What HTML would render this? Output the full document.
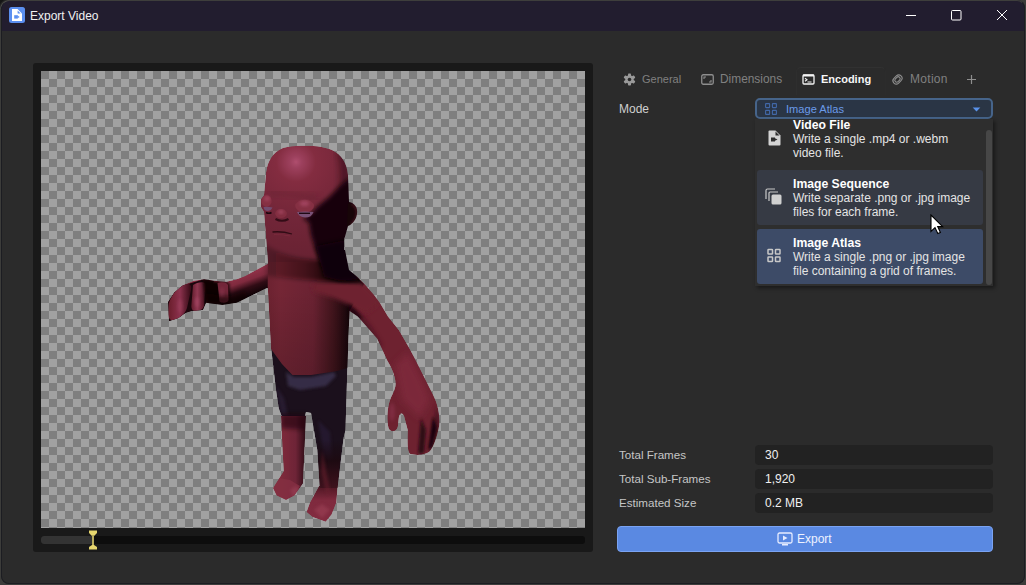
<!DOCTYPE html>
<html><head><meta charset="utf-8">
<style>
*{box-sizing:border-box;margin:0;padding:0}
html,body{width:1026px;height:585px;overflow:hidden;background:#1e1e1e;font-family:"Liberation Sans",sans-serif}
#win{position:absolute;left:0;top:0;width:1026px;height:585px;background:#2b2b2b;overflow:hidden}
#winb{position:absolute;left:1px;top:0px;width:1024px;height:584px;border-radius:8px;border:1px solid #1c1d22;border-top:1px solid #3e3e3c;box-shadow:0 0 0 30px #3c3c3a;pointer-events:none}
#title{position:absolute;left:0;top:0;width:1026px;height:31px;background:#221d2f}
.t{position:absolute;white-space:nowrap;line-height:1}
#preview{position:absolute;left:33px;top:63px;width:560px;height:489px;background:#191919;border-radius:3px}
#checker{position:absolute;left:41px;top:71px;width:544px;height:457px;
 background-color:#7f7f7f;
 background-image:linear-gradient(45deg,#a1a1a1 25%,transparent 25%,transparent 75%,#a1a1a1 75%),linear-gradient(45deg,#a1a1a1 25%,transparent 25%,transparent 75%,#a1a1a1 75%);
 background-size:16px 16px;background-position:0 0,8px 8px}
.lbl{position:absolute;font-size:11.6px;color:#c6c6c6;line-height:1;white-space:nowrap}
.box{position:absolute;left:755px;width:238px;height:20px;background:#222222;border-radius:4px}
.val{position:absolute;left:765px;font-size:12px;color:#f0f0f0;line-height:1;white-space:nowrap}
.tab{position:absolute;top:74px;font-size:12px;color:#8a8a8a;line-height:1;white-space:nowrap}
.item{position:absolute;left:757px;width:226px;height:55px;border-radius:3px}
.it{position:absolute;left:793px;font-size:12px;color:#e4e4e4;line-height:14px;white-space:nowrap}
.it b{font-weight:700;color:#fff;font-size:12.2px}
</style></head><body>
<div id="win">
 <div id="title">
  <svg class="t" style="left:9px;top:7px" width="16" height="16" viewBox="0 0 16 16">
   <rect x="0" y="0" width="16" height="16" rx="2.5" fill="#5b8ff0"/>
   <path d="M3 2 H8.5 L13 6.5 V14 H3 Z" fill="#fff"/>
   <path d="M8.6 3.6 L11.6 6.4 H8.6 Z" fill="#5b8ff0"/>
   <rect x="5.2" y="8.2" width="3.6" height="3.4" fill="#5b8ff0"/>
   <path d="M8.5 8.6 L10.7 9.9 L8.5 11.2Z" fill="#5b8ff0"/>
  </svg>
  <div class="t" style="left:30px;top:10px;font-size:12px;color:#f0f0f0">Export Video</div>
  <svg class="t" style="left:900px;top:0" width="125" height="31" viewBox="900 0 125 31">
   <path d="M906 15.5 H916" stroke="#fff" stroke-width="1"/>
   <rect x="951.5" y="10.5" width="9.5" height="9.5" rx="1" fill="none" stroke="#fff" stroke-width="1"/>
   <path d="M997 10 L1007 20 M1007 10 L997 20" stroke="#fff" stroke-width="1"/>
  </svg>
 </div>

 <div id="preview"></div>
 <div id="checker"></div>
 <svg id="fig" class="t" style="left:0;top:0" width="1026" height="585" viewBox="0 0 1026 585"><defs>
 <radialGradient id="gHead" cx="296" cy="162" r="100" gradientUnits="userSpaceOnUse">
  <stop offset="0" stop-color="#a84e80"/>
  <stop offset="0.06" stop-color="#96406c"/>
  <stop offset="0.2" stop-color="#7e2c4a"/>
  <stop offset="0.55" stop-color="#6e2642"/>
  <stop offset="1" stop-color="#64223a"/>
 </radialGradient>
 <linearGradient id="gTorso" x1="268" y1="0" x2="350" y2="0" gradientUnits="userSpaceOnUse">
  <stop offset="0" stop-color="#682238"/>
  <stop offset="0.15" stop-color="#70263e"/>
  <stop offset="0.55" stop-color="#66223a"/>
  <stop offset="0.8" stop-color="#3e1420"/>
  <stop offset="1" stop-color="#12040a"/>
 </linearGradient>
 <linearGradient id="gTorsoV" x1="0" y1="290" x2="0" y2="370" gradientUnits="userSpaceOnUse">
  <stop offset="0" stop-color="#000" stop-opacity="0"/>
  <stop offset="1" stop-color="#000" stop-opacity="0.15"/>
 </linearGradient>
 <linearGradient id="gArmL" x1="250" y1="272" x2="258" y2="294" gradientUnits="userSpaceOnUse">
  <stop offset="0" stop-color="#8c3254"/>
  <stop offset="0.3" stop-color="#7a2a48"/>
  <stop offset="0.6" stop-color="#2e0c18"/>
  <stop offset="1" stop-color="#0c0206"/>
 </linearGradient>
 <linearGradient id="gF1" x1="170" y1="0" x2="190" y2="0" gradientUnits="userSpaceOnUse">
  <stop offset="0" stop-color="#6a2038"/>
  <stop offset="0.5" stop-color="#86325a"/>
  <stop offset="1" stop-color="#3a0e1e"/>
 </linearGradient>
 <linearGradient id="gF2" x1="191" y1="0" x2="205" y2="0" gradientUnits="userSpaceOnUse">
  <stop offset="0" stop-color="#5a1a30"/>
  <stop offset="0.45" stop-color="#8a385e"/>
  <stop offset="1" stop-color="#4a1428"/>
 </linearGradient>
 <linearGradient id="gLegL" x1="280" y1="0" x2="306" y2="0" gradientUnits="userSpaceOnUse">
  <stop offset="0" stop-color="#7a2a44"/>
  <stop offset="0.6" stop-color="#6a2440"/>
  <stop offset="1" stop-color="#2a0c18"/>
 </linearGradient>
 <linearGradient id="gChin" x1="266" y1="0" x2="346" y2="0" gradientUnits="userSpaceOnUse">
  <stop offset="0" stop-color="#14040a" stop-opacity="0.2"/>
  <stop offset="0.5" stop-color="#14040a" stop-opacity="0.5"/>
  <stop offset="1" stop-color="#0a0206" stop-opacity="1"/>
 </linearGradient>
 <filter id="hue" color-interpolation-filters="sRGB"><feColorMatrix type="matrix" values="1.04 0 0 0 0  0 1 0 0 0  0 0 0.86 0 0  0 0 0 1 0"/></filter>
 <linearGradient id="gLegR" x1="0" y1="440" x2="0" y2="500" gradientUnits="userSpaceOnUse">
  <stop offset="0" stop-color="#180a14" stop-opacity="0"/>
  <stop offset="0.35" stop-color="#1c0a14"/>
  <stop offset="1" stop-color="#4a1628"/>
 </linearGradient>
 <linearGradient id="gFootR" x1="0" y1="486" x2="0" y2="522" gradientUnits="userSpaceOnUse">
  <stop offset="0" stop-color="#4a1628"/>
  <stop offset="0.4" stop-color="#7a2a48"/>
  <stop offset="1" stop-color="#7e2c4a"/>
 </linearGradient>
 <filter id="blur1" x="-20%" y="-20%" width="140%" height="140%"><feGaussianBlur stdDeviation="1.5"/></filter>
 <filter id="blur2" x="-30%" y="-30%" width="160%" height="160%"><feGaussianBlur stdDeviation="2.2"/></filter>
 <filter id="blur3" x="-30%" y="-30%" width="160%" height="160%"><feGaussianBlur stdDeviation="3.5"/></filter>
 <path id="sArmL" d="M271 262 L245 276 L236.8 279.2 L226.5 281.8 L214.2 280.8 L204 279.2 L193.7 280.8 L182.4 285.4 L174.2 292.6 L168 301.8 L168.5 314 L169 321.3 L178.3 318.2 L185.5 313 L191.7 311 L203 310 L206 302.8 L222.4 304.9 L236.8 302.8 L245 298.7 L266.6 288.3 L271 288 Z"/>
 <path id="sArmR" d="M345 262 L349 270 L357.5 277 L364.3 283.8 L373.9 294.7 L380 303 L388 316.5 L398.8 330 L408.4 346.6 L413.8 356.4 L422 372.8 L432.3 393.3 C436 400 439.5 410 439.5 422 C439 432 434 446 430.3 450.8 C427 455 416 456 409.7 453.8 C407 450 407.5 440 407.7 430 L404 416 C402 412 399.5 413 398.8 418 L397.8 427 C396.5 432 390.5 433 388.5 428 C386.5 420 387.5 408 389.5 401.5 C391.5 395 395.5 390 395.6 384 C395.5 375 390 365 387.2 360.5 L382.4 350 L377 338.4 L367.4 327.5 L357.8 316.5 L349.6 311 L345 290 Z"/>
 <path id="sShorts" d="M271 347 L276 390 L278.8 408.6 L282 417 L305 416 L306 412 L311 413 L317.3 450 L319.7 488 L337.6 488 L343.6 438 L345.5 430 L347 381 L348 345 Z"/>
 <path id="sLegL" d="M281 416 L282.5 450 L283.7 471 L279 478.6 L273 488 L276.6 495.4 L286 500 L294.5 495.4 L303 483.4 L304 462 L306 416 Z"/>
 <path id="sFootR" d="M319 486 L310 502.6 L306.5 512 L312.5 517 L325.7 521.7 L331.6 514.5 L336.4 502.6 L337.6 486 Z"/>
 <path id="sTorso" d="M268 250 L345 250 L349 270 L364 284 L349.6 311 L348.5 337 L347.5 368 L337 371 L311 375 L292.5 375 L282 364 L271 349 L269 311 L267.7 286 Z"/>
 <path id="sHead" d="M296 146 C310 145 324 146 332 150 C342 155 347 163 348 175 L349 202 C355 203 358 208 357 214 C356 221 351 225 348 226 L344 240 L344.5 262 L268 262 L265.6 232.6 L264 212 L261 207 L261 199 L264 195 L265.6 178 C266 164 271 155 279 150 C284 147 290 146 296 146 Z"/>
 <clipPath id="cBody"><use href="#sArmL"/><use href="#sArmR"/><use href="#sShorts"/><use href="#sLegL"/><use href="#sFootR"/><use href="#sTorso"/><use href="#sHead"/></clipPath>
</defs>
<g filter="url(#hue)"><g clip-path="url(#cBody)">
<!-- left arm -->
<use href="#sArmL" fill="url(#gArmL)"/>
<path d="M168 302 L174 292.6 L182.4 285.4 L204 279.2 L214 281 L206 302.8 L203 310 L191.7 311 L185.5 313 L178.3 318.2 L169 321.3 Z" fill="#1a060e"/>
<path d="M169 303 C172 294 178 287 186 284 C190 283 192 286 191 290 L187 308 C185 314 180 318 174 320 C170 321 168 318 168.5 313 Z" fill="url(#gF1)"/>
<path d="M193 285 C197 282 204 281 206 284 L204 306 C203 310 198 311.5 194 311 C191.5 310 191 307 191.5 304 Z" fill="url(#gF2)"/>
<path d="M203 279.5 L218 281.5 L229 283 L230 303 L206 303.5 Z" fill="#0e0306" filter="url(#blur1)"/>
<path d="M217.5 283 C221 281.5 227 282 228 285 L228.6 300 C228 303 222 303.5 219.5 301.5 Z" fill="#6e2642"/>
<path d="M206 293 L217 295 L230 296 L245 291 L250 302 L206 308 Z" fill="#0c0206" opacity="0.6" filter="url(#blur2)"/>
<ellipse cx="197" cy="302" rx="2.2" ry="5" fill="#a04a78" opacity="0.65" filter="url(#blur1)"/>
<ellipse cx="180" cy="306" rx="2.5" ry="7" fill="#9a4470" opacity="0.55" filter="url(#blur1)"/>
<ellipse cx="222" cy="292" rx="2" ry="5" fill="#8a3a60" opacity="0.5" filter="url(#blur1)"/>
<!-- right arm -->
<use href="#sArmR" fill="#6a2238"/>
<path d="M395 365 L408 352 L422 380 L430 400 L420 418 L402 400 Z" fill="#7a2a46" filter="url(#blur3)" opacity="0.8"/>
<path d="M349 306 L360 312 L372 328 L382 345 L376 350 L360 330 L349 320 Z" fill="#3a1020" filter="url(#blur2)" opacity="0.6"/>
<ellipse cx="392" cy="412" rx="3" ry="9" fill="#86345a" opacity="0.55" filter="url(#blur1)"/>
<path d="M436 405 L440 420 L436 440 L431 450 L434 420 Z" fill="#3a1020" opacity="0.6" filter="url(#blur1)"/>
<path d="M421 418 L426 430 L424 453 L418 454 Z" fill="#2a0a16" filter="url(#blur1)"/>
<path d="M433 416 L437 428 L432 448 L428 450 Z" fill="#14040a" filter="url(#blur1)"/>
<!-- shorts -->
<use href="#sShorts" fill="#1a1020"/>
<path d="M286 372 L294 377 L311 377 L334 372 L336 376 L326 386 L300 390 L288 386 Z" fill="#38305a" opacity="0.85" filter="url(#blur1)"/>
<path d="M276 386 L284 398 L288 416 L281 415 Z" fill="#302850" opacity="0.5" filter="url(#blur1)"/>
<path d="M318 420 L330 432 L333 468 L326 468 Z" fill="#2e2450" opacity="0.45" filter="url(#blur1)"/>
<!-- left leg -->
<use href="#sLegL" fill="url(#gLegL)"/>
<path d="M281 414 L306 414 L306 430 L281 428 Z" fill="#1a0610" opacity="0.6" filter="url(#blur2)"/>
<path d="M279 478 L273 488 L276.6 495.4 L286 500 L294.5 495.4 L300 486 L290 480 Z" fill="#80304e" opacity="0.8"/>
<!-- right foot -->
<use href="#sFootR" fill="url(#gFootR)"/>
<path d="M317 440 L319.7 488 L337.6 488 L342 440 Z" fill="url(#gLegR)"/>
<path d="M322 450 L326 470 L330 492 L327 494 L321 472 Z" fill="#6a2238" opacity="0.5" filter="url(#blur1)"/>
<path d="M290 490 L296 486 L300 490 L294 498 Z" fill="#9a4468" opacity="0.5" filter="url(#blur1)"/>
<path d="M314 510 L322 504 L330 510 L322 518 Z" fill="#9a4468" opacity="0.5" filter="url(#blur1)"/>
<!-- torso -->
<use href="#sTorso" fill="url(#gTorso)"/>
<use href="#sTorso" fill="url(#gTorsoV)"/>
<path d="M312 283 L345 282 L362 283 L374 295 L380 303 L366 314 L352 306 L334 298 L314 292 Z" fill="#6a2238" filter="url(#blur2)"/>
<path d="M349 304 L356 310 L362 318 L352 322 L349 315 Z" fill="#1a060e" opacity="0.8" filter="url(#blur1)"/>
<!-- head -->
<use href="#sHead" fill="url(#gHead)"/>
<path d="M262 240 C275 255 300 260 322 260 L346 258 L350 280 C330 282 300 280 266 276 Z" fill="url(#gChin)" filter="url(#blur2)"/>
<path d="M345 150 C350 170 350 190 349 205 L338 200 C342 185 342 165 337 150 Z" fill="#1a060e" opacity="0.55" filter="url(#blur3)"/>
<path d="M303 219 L309 222 L311 235 L315 248 L320 262 L328.5 277 L345 281 L360 281 L349 270 L352 260 L360 240 L362 212 L358 190 L352 176 L340 186 L328 198 L317 207 L312 213 Z" fill="#12040a" filter="url(#blur2)"/>
<path d="M316 246 L346 240 L352 270 L362 279 L340 281 L324 277 Z" fill="#0e0408" opacity="0.95" filter="url(#blur2)"/>
<path d="M348 203 C354 203 358 208 357 214 C356 221 351 225 347 226 Z" fill="#160509"/>
<path d="M352 204 C356 206 357.5 210 357 214 C356.5 219 354 222 351 224" stroke="#5a1a30" stroke-width="1.6" fill="none" filter="url(#blur1)"/>

<!-- eyes / features -->
<path d="M268 193 C282 192 300 195 318 198" stroke="#4a1628" stroke-width="5" fill="none" opacity="0.3" filter="url(#blur3)"/>
<ellipse cx="266.5" cy="201" rx="5.2" ry="5.8" fill="#80304e"/>
<ellipse cx="267" cy="198.5" rx="2.8" ry="2.6" fill="#a04672" opacity="0.75" filter="url(#blur1)"/>
<path d="M263.5 207 Q268 206.5 272.5 207.5 Q271 211 267 211 Q264 210.5 263.5 207 Z" fill="#6e4c82"/>
<path d="M266 212.5 Q269 214 271.5 212.5" stroke="#1a0610" stroke-width="1.6" fill="none"/>
<ellipse cx="304.6" cy="206" rx="9.4" ry="6.3" fill="#80304e"/>
<ellipse cx="304.5" cy="203.5" rx="4.5" ry="2.8" fill="#a24a78" opacity="0.75" filter="url(#blur1)"/>
<path d="M297 212 Q305 211 313.5 212 Q312 217.5 305 217.5 Q299 217 297 212 Z" fill="#74528a"/>
<path d="M299 213.3 H310" stroke="#1a0610" stroke-width="1.3"/>
<ellipse cx="281" cy="213.5" rx="5.8" ry="4.6" fill="#7e2e4c"/>
<ellipse cx="281" cy="212" rx="2.6" ry="2" fill="#a04a76" opacity="0.8" filter="url(#blur1)"/>
<path d="M275.5 219 Q282 222.5 288.5 219" stroke="#2a0a16" stroke-width="2.2" fill="none" opacity="0.9"/>
<path d="M272.5 232 Q282 231 292 234" stroke="#2e0c18" stroke-width="1.3" fill="none"/>
<path d="M274 234.5 Q283 234.5 290 236" stroke="#7a2c48" stroke-width="1.2" fill="none" opacity="0.7"/>
</g></g>
</svg>

 <!-- timeline -->
 <div style="position:absolute;left:41px;top:536px;width:544px;height:8px;background:#0d0d0d;border-radius:3px"></div>
 <div style="position:absolute;left:41px;top:536px;width:52px;height:8px;background:#333;border-radius:3px 0 0 3px"></div>
 <svg class="t" style="left:88px;top:530px" width="10" height="20" viewBox="0 0 10 20">
  <path d="M1 0.5 H9 V3 L6 6 V15 L9 17 V19.5 H1 V17 L4 15 V6 L1 3 Z" fill="#e6d66e"/>
  <rect x="4.4" y="5" width="1.2" height="10" fill="#9a9050"/>
 </svg>

 <!-- tabs -->
 <div style="position:absolute;left:796px;top:67px;width:90px;height:28px;border:1px solid #313131;border-bottom:none;border-right-color:#2c2c2c;border-left-color:#2e2e2e;border-radius:5px 5px 0 0"></div>
 <svg class="t" style="left:623px;top:73px" width="13" height="13" viewBox="0 0 13 13">
  <g fill="#9a9a9a"><circle cx="6.5" cy="6.5" r="4.2"/>
  <rect x="5" y="0.5" width="3" height="12" rx="0.8"/>
  <rect x="5" y="0.5" width="3" height="12" rx="0.8" transform="rotate(60 6.5 6.5)"/>
  <rect x="5" y="0.5" width="3" height="12" rx="0.8" transform="rotate(120 6.5 6.5)"/></g>
  <circle cx="6.5" cy="6.5" r="1.8" fill="#2b2b2b"/>
 </svg>
 <div class="tab" style="left:642px;font-size:11px;top:74px;color:#808080">General</div>
 <svg class="t" style="left:701px;top:74px" width="13" height="11" viewBox="0 0 13 11">
  <rect x="0.75" y="0.75" width="11.5" height="9.5" rx="1.5" fill="none" stroke="#8e8e8e" stroke-width="1.3"/>
  <path d="M3 5 V3 H5" fill="none" stroke="#8e8e8e" stroke-width="1.1"/>
  <path d="M10 6 V8 H8" fill="none" stroke="#8e8e8e" stroke-width="1.1"/>
 </svg>
 <div class="tab" style="left:720px;top:74px;font-size:11.9px;color:#808080">Dimensions</div>
 <svg class="t" style="left:802px;top:74px" width="13" height="11" viewBox="0 0 13 11">
  <rect x="1" y="1" width="11" height="9" rx="1" fill="none" stroke="#f4f4f4" stroke-width="1.3"/>
  <rect x="1" y="0.5" width="11" height="2" fill="#f4f4f4"/>
  <path d="M3 4.3 L5 5.8 L3 7.3" fill="none" stroke="#f4f4f4" stroke-width="1.1"/>
  <path d="M5.5 8 H9.5" stroke="#f4f4f4" stroke-width="1"/>
 </svg>
 <div class="tab" style="left:821px;top:74px;font-size:11px;font-weight:700;color:#f6f6f6">Encoding</div>
 <svg class="t" style="left:891px;top:73px" width="13" height="13" viewBox="0 0 13 13">
  <g fill="none" stroke="#8e8e8e" stroke-width="1.1" transform="rotate(-45 6.5 6.5)">
   <rect x="1.5" y="3.2" width="10" height="6.6" rx="3.3"/>
   <rect x="3.5" y="4.6" width="6" height="3.8" rx="1.9"/>
  </g>
 </svg>
 <div class="tab" style="left:910px;top:73.4px;font-size:12px;color:#808080;letter-spacing:0.3px">Motion</div>
 <svg class="t" style="left:966px;top:74px" width="11" height="11" viewBox="0 0 11 11">
  <path d="M5.5 1 V10 M1 5.5 H10" stroke="#8e8e8e" stroke-width="1.2"/>
 </svg>

 <div class="lbl" style="left:619px;top:103px;font-size:12px;color:#cfcfcf">Mode</div>

 <!-- dropdown -->
 <div style="position:absolute;left:755px;top:97.5px;width:238px;height:21.5px;background:#2a3545;border:2px solid #46648a;border-radius:5px"></div>
 <svg class="t" style="left:765px;top:102.5px" width="12" height="12" viewBox="0 0 12 12">
  <g fill="none" stroke="#4268a8" stroke-width="1.1">
  <rect x="0.6" y="0.6" width="4" height="4" rx="0.5"/><rect x="7.4" y="0.6" width="4" height="4" rx="0.5"/>
  <rect x="0.6" y="7.4" width="4" height="4" rx="0.5"/><rect x="7.4" y="7.4" width="4" height="4" rx="0.5"/></g>
 </svg>
 <div class="t" style="left:786px;top:104px;font-size:11.1px;color:#6a9bea">Image Atlas</div>
 <svg class="t" style="left:972px;top:106.5px" width="9" height="5" viewBox="0 0 9 5"><path d="M0.7 0.4 H8.3 L4.5 4.4Z" fill="#5a92ea"/></svg>

 <!-- popup -->
 <div style="position:absolute;left:755px;top:119px;width:238px;height:167px;background:#2e2e2e;box-shadow:2px 2px 4px rgba(0,0,0,0.45)"></div>
 <div style="position:absolute;left:986px;top:130px;width:6px;height:155px;background:#474747;border-radius:3px"></div>
 <div class="item" style="top:170px;background:#363a44"></div>
 <div class="item" style="top:229px;height:55px;background:#3d4b67"></div>

 <svg class="t" style="left:768px;top:130px" width="13" height="16" viewBox="0 0 13 16">
  <path d="M0.5 1.5 Q0.5 0.5 1.5 0.5 H7.5 L12.5 5.5 V14.5 Q12.5 15.5 11.5 15.5 H1.5 Q0.5 15.5 0.5 14.5Z" fill="#d4d4d4"/>
  <path d="M7.5 1.5 L11.5 5.5 H7.5Z" fill="#2e2e2e"/>
  <rect x="3" y="7.5" width="4" height="4" fill="#2e2e2e"/>
  <path d="M6.5 8 L9.5 9.5 L6.5 11Z" fill="#2e2e2e"/>
 </svg>
 <div class="it" style="top:118px"><b>Video File</b><br>Write a single .mp4 or .webm<br>video file.</div>

 <svg class="t" style="left:765px;top:188px" width="18" height="17" viewBox="0 0 18 17">
  <path d="M1 11 V2.5 Q1 1 2.5 1 H10" fill="none" stroke="#c8c8c8" stroke-width="1.2"/>
  <path d="M4 13 V5 Q4 4 5 4 H13" fill="none" stroke="#c8c8c8" stroke-width="1.2"/>
  <rect x="6.5" y="6.5" width="10" height="10" rx="1.5" fill="#d0d0d0"/>
 </svg>
 <div class="it" style="top:177px"><b>Image Sequence</b><br>Write separate .png or .jpg image<br>files for each frame.</div>

 <svg class="t" style="left:767px;top:248px" width="14" height="15" viewBox="0 0 14 15">
  <g fill="none" stroke="#c8c8c8" stroke-width="1.5">
  <rect x="1" y="1.5" width="4.5" height="4.5" rx="0.6"/><rect x="8.5" y="1.5" width="4.5" height="4.5" rx="0.6"/>
  <rect x="1" y="9" width="4.5" height="4.5" rx="0.6"/><rect x="8.5" y="9" width="4.5" height="4.5" rx="0.6"/></g>
 </svg>
 <div class="it" style="top:236px"><b>Image Atlas</b><br>Write a single .png or .jpg image<br>file containing a grid of frames.</div>

 <svg class="t" style="left:930px;top:214px" width="14" height="21" viewBox="0 0 14 21">
  <path d="M1 1 L1 17.5 L5 13.6 L7.8 19.6 L10.4 18.5 L7.7 12.6 L12.6 12.6 Z" fill="#fff" stroke="#000" stroke-width="1.1" stroke-linejoin="miter"/>
 </svg>
 <!-- stats -->
 <div class="box" style="top:445px"></div>
 <div class="box" style="top:469px"></div>
 <div class="box" style="top:493px"></div>
 <div class="lbl" style="left:619px;top:449px">Total Frames</div>
 <div class="lbl" style="left:619px;top:473px">Total Sub-Frames</div>
 <div class="lbl" style="left:619px;top:497px">Estimated Size</div>
 <div class="val" style="top:449px">30</div>
 <div class="val" style="top:473px">1,920</div>
 <div class="val" style="top:497px">0.2 MB</div>

 <!-- export -->
 <div style="position:absolute;left:617px;top:526px;width:376px;height:26px;background:#5a89e2;border:1px solid #7aa3f2;border-radius:4px"></div>
 <svg class="t" style="left:777px;top:532px" width="16" height="14" viewBox="0 0 16 14">
  <rect x="1" y="1" width="14" height="10" rx="1.5" fill="none" stroke="#e6ecff" stroke-width="1.3"/>
  <path d="M6 3.5 L10.5 6 L6 8.5Z" fill="#e6ecff"/>
  <rect x="5" y="12" width="6" height="1.5" fill="#e6ecff"/>
 </svg>
 <div class="t" style="left:797px;top:533px;font-size:12px;color:#eef2ff">Export</div>
</div>
<div id="winb"></div>
<div style="position:absolute;left:0;top:0;width:9px;height:9px;background:radial-gradient(circle at 9px 9px,rgba(0,0,0,0) 7.6px,#4a4a48 8.3px,#2a2a2a 9.2px,#151515 10.5px)"></div>
</body></html>
